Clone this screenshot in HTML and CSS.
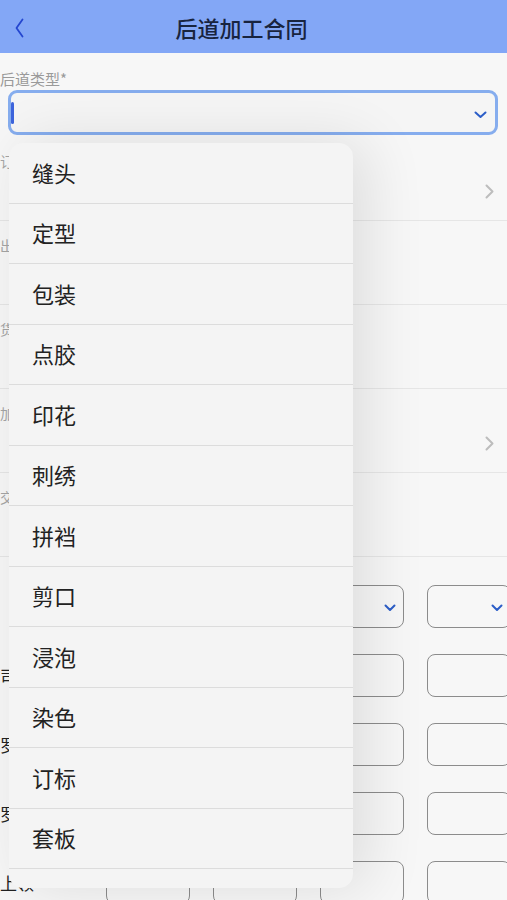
FILE: index.html
```html
<!DOCTYPE html>
<html lang="zh-CN">
<head>
    <meta charset="UTF-8">
    <meta name="viewport" content="width=device-width, initial-scale=1.0">
    <title>后道加工合同</title>
    <link rel="stylesheet" href="styles.css">
</head>
<body>

    <div class="screen">
        <!-- Barre du haut -->
        <header class="topbar">
            <span class="back">
                <svg width="9" height="20" viewBox="0 0 9 20"><polyline points="7.5,1.5 1.5,10 7.5,18.5" fill="none" stroke="#2446cf" stroke-width="1.8" stroke-linecap="round" stroke-linejoin="round"/></svg>
            </span>
            <h1 class="title">后道加工合同</h1>
            <span></span>
        </header>

        <main class="form">
            <div class="field-label">后道类型*</div>
            <div class="select focused">
                <span class="caret"></span>
                <svg class="select-arrow" width="13" height="8" viewBox="0 0 13 8"><polyline points="1.5,1.5 6.5,6 11.5,1.5" fill="none" stroke="#2c5ec8" stroke-width="2" stroke-linecap="round" stroke-linejoin="round"/></svg>
            </div>

            <!-- Lignes d'informations -->
            <div class="list">
                <div class="list-row">
                    <div class="row-label">订单编号</div>
                    <div class="row-value">
                        <svg width="9" height="15" viewBox="0 0 9 15"><polyline points="1.5,1.5 7.5,7.5 1.5,13.5" fill="none" stroke="#bdbdbd" stroke-width="2" stroke-linecap="round" stroke-linejoin="round"/></svg>
                    </div>
                </div>
                <div class="list-row">
                    <div class="row-label">出货日期</div>
                    <div class="row-value"></div>
                </div>
                <div class="list-row">
                    <div class="row-label">货号</div>
                    <div class="row-value"></div>
                </div>
                <div class="list-row">
                    <div class="row-label">加工单位</div>
                    <div class="row-value">
                        <svg width="9" height="15" viewBox="0 0 9 15"><polyline points="1.5,1.5 7.5,7.5 1.5,13.5" fill="none" stroke="#bdbdbd" stroke-width="2" stroke-linecap="round" stroke-linejoin="round"/></svg>
                    </div>
                </div>
                <div class="list-row">
                    <div class="row-label">交货日期</div>
                    <div class="row-value"></div>
                </div>
            </div>

            <!-- Grille des tailles -->
            <div class="spec-grid">
                <div class="spec-label"></div>
                <div class="box"><svg class="box-arrow" width="12" height="8" viewBox="0 0 12 8"><polyline points="1.5,1.5 6,6 10.5,1.5" fill="none" stroke="#2c5ec8" stroke-width="2" stroke-linecap="round" stroke-linejoin="round"/></svg></div>
                <div class="box"><svg class="box-arrow" width="12" height="8" viewBox="0 0 12 8"><polyline points="1.5,1.5 6,6 10.5,1.5" fill="none" stroke="#2c5ec8" stroke-width="2" stroke-linecap="round" stroke-linejoin="round"/></svg></div>
                <div class="box"><svg class="box-arrow" width="12" height="8" viewBox="0 0 12 8"><polyline points="1.5,1.5 6,6 10.5,1.5" fill="none" stroke="#2c5ec8" stroke-width="2" stroke-linecap="round" stroke-linejoin="round"/></svg></div>
                <div class="box"><svg class="box-arrow" width="12" height="8" viewBox="0 0 12 8"><polyline points="1.5,1.5 6,6 10.5,1.5" fill="none" stroke="#2c5ec8" stroke-width="2" stroke-linecap="round" stroke-linejoin="round"/></svg></div>

                <div class="spec-label">司码</div>
                <div class="box"></div><div class="box"></div><div class="box"></div><div class="box"></div>

                <div class="spec-label">罗纹</div>
                <div class="box"></div><div class="box"></div><div class="box"></div><div class="box"></div>

                <div class="spec-label">罗口</div>
                <div class="box"></div><div class="box"></div><div class="box"></div><div class="box"></div>

                <div class="spec-label">上领</div>
                <div class="box"></div><div class="box"></div><div class="box"></div><div class="box"></div>
            </div>
        </main>

        <!-- Liste déroulante ouverte -->
        <div class="picker">
            <ul class="picker-list">
                <li>缝头</li>
                <li>定型</li>
                <li>包装</li>
                <li>点胶</li>
                <li>印花</li>
                <li>刺绣</li>
                <li>拼裆</li>
                <li>剪口</li>
                <li>浸泡</li>
                <li>染色</li>
                <li>订标</li>
                <li>套板</li>
            </ul>
        </div>
    </div>

</body>
</html>
```

FILE: styles.css
```css
body {
    margin: 0;
    padding: 0;
    font-family: "Noto Sans CJK SC", "Noto Sans", sans-serif;
    background-color: #f6f6f6;
}
.screen {
    position: relative;
    width: 507px;
    height: 900px;
    overflow: hidden;
    background-color: #f7f7f7;
}
.topbar {
    height: 53px;
    display: grid;
    grid-template-columns: 46px 1fr 70px;
    align-items: center;
    background-color: #83a7f6;
}
.back {
    display: flex;
    padding-left: 15px;
    padding-top: 2px;
}
.title {
    margin: 0;
    text-align: center;
    font-size: 22px;
    font-weight: 500;
    color: #18243f;
}
.form {
    padding: 0;
}
.field-label {
    margin-top: 15px;
    height: 22px;
    line-height: 22px;
    font-size: 15px;
    color: #9a9a9a;
}
.select {
    box-sizing: border-box;
    height: 45px;
    margin: 0 9px 2px 8px;
    display: flex;
    align-items: center;
    justify-content: space-between;
    padding-right: 8px;
    border: 3px solid #86adee;
    border-radius: 9px;
    background-color: #f5f5f5;
}
.caret {
    width: 3px;
    height: 22px;
    border-radius: 2px;
    background-color: #3d64dc;
}
.select-arrow {
    margin-top: 4px;
}
.list-row {
    box-sizing: border-box;
    height: 84px;
    padding-top: 14px;
    border-bottom: 1px solid #e6e6e6;
}
.row-label {
    height: 20px;
    line-height: 20px;
    font-size: 14px;
    color: #a5a5a5;
}
.row-value {
    height: 40px;
    display: flex;
    align-items: center;
    justify-content: flex-end;
    padding-right: 13px;
}
.spec-grid {
    margin-top: 28px;
    display: grid;
    grid-template-columns: 83px repeat(4, 84px);
    grid-auto-rows: 43px;
    column-gap: 23px;
    row-gap: 26px;
}
.spec-label {
    display: flex;
    align-items: center;
    font-size: 17px;
    color: #222;
}
.box {
    box-sizing: border-box;
    display: flex;
    align-items: center;
    justify-content: flex-end;
    padding-right: 7px;
    border: 1.5px solid #8c8c8c;
    border-radius: 8px;
}
.box-arrow {
    margin-top: 2px;
}
.picker {
    position: absolute;
    top: 143px;
    left: 9px;
    width: 344px;
    height: 745px;
    overflow: hidden;
    border-radius: 14px;
    background-color: #f4f4f4;
    box-shadow: 14px 0 60px rgba(0, 0, 0, 0.11);
}
.picker-list {
    list-style: none;
    margin: 0;
    padding: 0;
}
.picker-list li {
    box-sizing: border-box;
    height: 60.5px;
    display: flex;
    align-items: center;
    padding-left: 23px;
    padding-bottom: 2px;
    border-bottom: 1.5px solid #dcdcdc;
    font-size: 22px;
    color: #222;
}
```
